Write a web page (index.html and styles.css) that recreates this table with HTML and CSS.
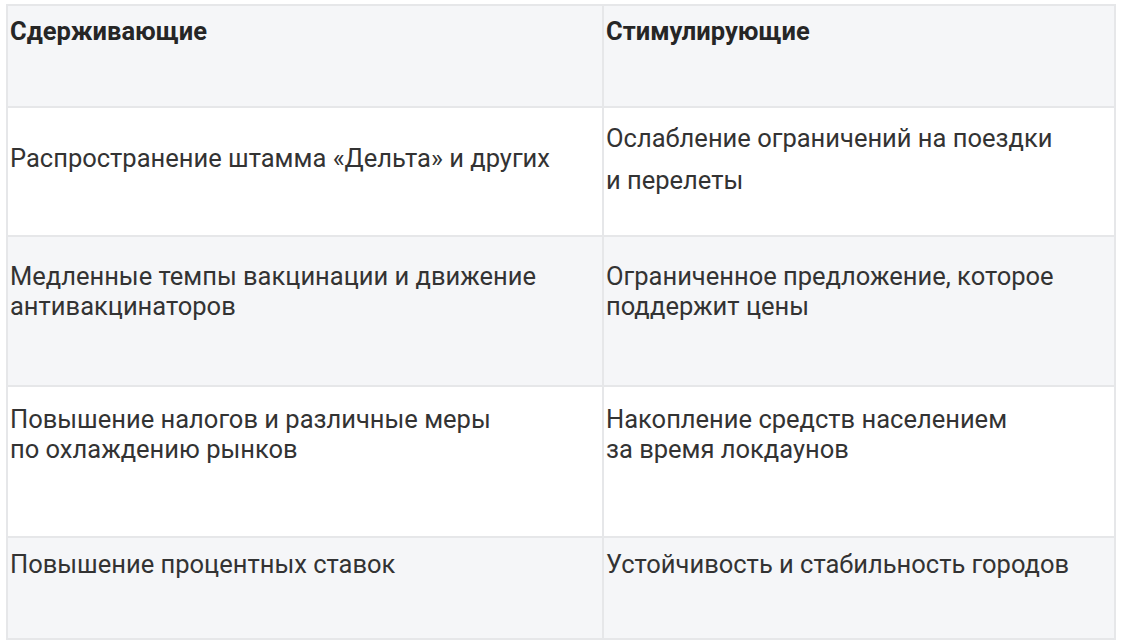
FILE: index.html
```html
<!DOCTYPE html>
<html lang="ru">
<head>
<meta charset="utf-8">
<link rel="stylesheet" href="styles.css">
</head>
<body>
<table class="factors">
  <thead>
    <tr class="head">
      <th>Сдерживающие</th>
      <th>Стимулирующие</th>
    </tr>
  </thead>
  <tbody>
    <tr class="r1">
      <td><p class="single">Распространение штамма «Дельта» и других</p></td>
      <td><p>Ослабление ограничений на поездки</p><p>и перелеты</p></td>
    </tr>
    <tr class="r2 alt">
      <td><p>Медленные темпы вакцинации и движение<br>антивакцинаторов</p></td>
      <td><p>Ограниченное предложение, которое<br>поддержит цены</p></td>
    </tr>
    <tr class="r3">
      <td><p>Повышение налогов и различные меры<br>по охлаждению рынков</p></td>
      <td><p>Накопление средств населением<br>за время локдаунов</p></td>
    </tr>
    <tr class="r4 alt">
      <td><p>Повышение процентных ставок</p></td>
      <td><p>Устойчивость и стабильность городов</p></td>
    </tr>
  </tbody>
</table>
</body>
</html>
```

FILE: styles.css
```css
html, body {
  margin: 0;
  padding: 0;
  background: #ffffff;
}
body {
  padding: 4px 6px;
  font-family: Roboto, "Noto Sans", sans-serif;
  color: #333333;
}
.factors {
  width: 1110px;
  border-collapse: collapse;
  table-layout: fixed;
}
.factors th,
.factors td {
  border: 2px solid #e6e7e9;
  vertical-align: top;
  text-align: left;
  padding: 0 2px 0 2px;
  font-size: 25.5px;
  line-height: 30px;
}
.factors th:first-child,
.factors td:first-child {
  width: 590px;
}
.head th {
  background: #f5f6f8;
  height: 90px;
  font-weight: 700;
  padding-top: 10px;
  color: #262626;
}
.factors p {
  margin: 0;
}
.alt td {
  background: #f5f6f8;
}
.r1 td {
  height: 112px;
  padding-top: 15px;
}
.r1 td p + p {
  margin-top: 12px;
}
.r1 td p.single {
  margin-top: 20px;
}
.r2 td {
  height: 124px;
  padding-top: 24px;
}
.r3 td {
  height: 132px;
  padding-top: 17px;
}
.r4 td {
  height: 89px;
  padding-top: 11px;
}
```
